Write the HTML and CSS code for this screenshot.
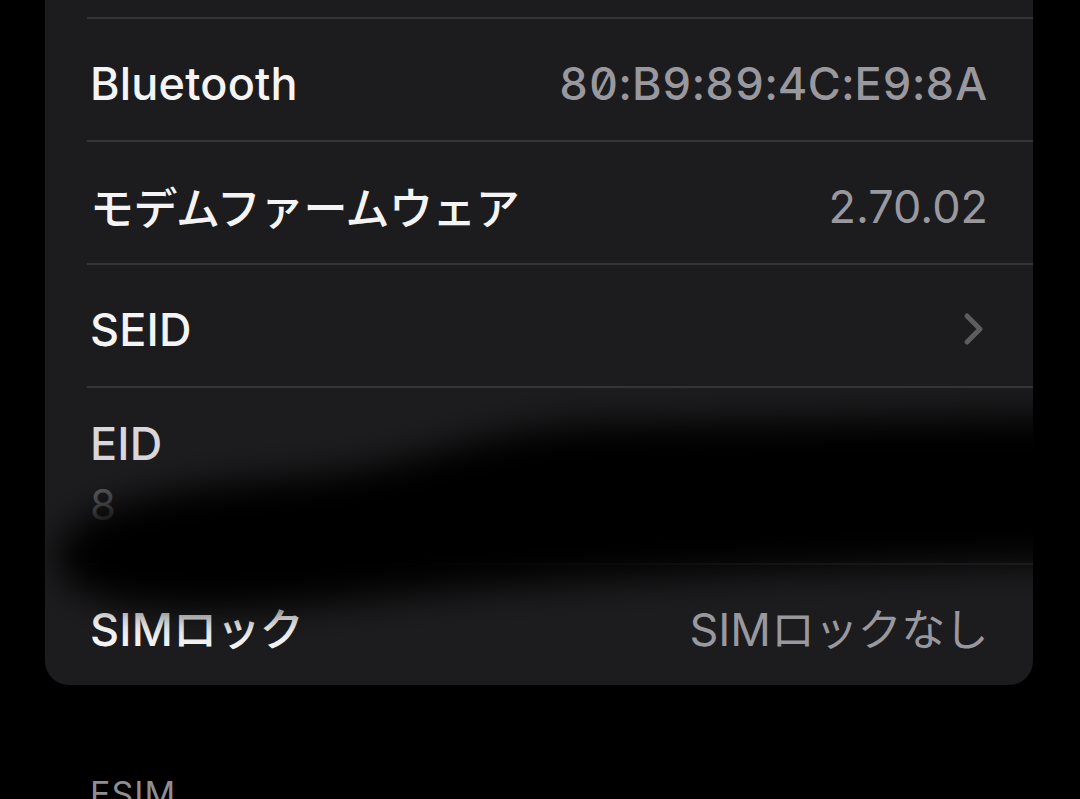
FILE: index.html
```html
<!DOCTYPE html>
<html lang="ja">
<head>
<meta charset="utf-8">
<link rel="stylesheet" href="styles.css">
</head>
<body>
<div class="screen">
  <div class="card">
    <div class="row top"></div>
    <div class="row">
      <span class="label">Bluetooth</span>
      <span class="value mono">80:B9:89:4C:E9:8A</span>
    </div>
    <div class="row">
      <span class="label ja">モデムファームウェア</span>
      <span class="value">2.70.02</span>
    </div>
    <div class="row">
      <span class="label">SEID</span>
      <svg class="chev" width="24" height="34" viewBox="0 0 24 34"><path d="M5 4 L18 17 L5 30" fill="none" stroke="#5c5c61" stroke-width="5" stroke-linecap="round" stroke-linejoin="round"/></svg>
    </div>
    <div class="row eid">
      <span class="label">EID</span>
      <span class="eidval">8</span>
    </div>
    <div class="row last">
      <span class="label">SIM<span class="ja">ロック</span></span>
      <span class="value">SIM<span class="ja">ロックなし</span></span>
    </div>
  </div>
  <div class="section-head">ESIM</div>
  <svg class="smudge" width="1080" height="799" viewBox="0 0 1080 799">
    <defs>
      <filter id="blur" x="-20%" y="-50%" width="140%" height="200%">
        <feGaussianBlur stdDeviation="17"/>
      </filter>
    </defs>
    <path filter="url(#blur)" fill="#000" d="M58 562 C50 508 170 486 290 478 C410 470 460 432 590 424 L1065 416 L1070 562 C830 566 560 576 330 602 C170 616 66 608 58 562 Z"/>
  </svg>
</div>
</body>
</html>
```

FILE: styles.css
```css
html, body {
  margin: 0;
  padding: 0;
  background: #000;
}
body {
  font-family: Inter, "Noto Sans CJK JP", sans-serif;
  color: #f4f4f5;
  overflow: hidden;
}
.screen {
  position: relative;
  width: 1080px;
  height: 799px;
  overflow: hidden;
}
.card {
  margin: -40px 47px 0 45px;
  background: #1c1c1e;
  border-radius: 24px;
  overflow: hidden;
}
.row {
  margin-left: 42px;
  padding: 7px 45px 0 3px;
  height: 114px;
  display: flex;
  align-items: center;
  justify-content: space-between;
  border-bottom: 2px solid #353538;
}
.row.top {
  height: 57px;
  padding-top: 0;
}
.row.eid {
  height: 175px;
  padding-top: 0;
  flex-direction: column;
  align-items: flex-start;
  justify-content: flex-start;
}
.row.last {
  border-bottom: none;
  height: 116px;
  padding-top: 4px;
}
.label {
  font-size: 45px;
  font-weight: 500;
  letter-spacing: 0.2px;
  white-space: nowrap;
}
.value {
  font-size: 45px;
  color: #98989e;
  white-space: nowrap;
}
.mono {
  font-feature-settings: "tnum" 1, "zero" 1;
  letter-spacing: 0.8px;
  font-weight: 500;
}
.ja {
  font-family: "Noto Sans CJK JP", sans-serif;
  font-size: 44px;
  letter-spacing: -0.6px;
}
.label .ja, .label.ja { font-weight: 500; }
.value .ja { font-weight: 400; }
.chev {
  display: block;
  margin-right: 2px;
}
.eid .label {
  margin-top: 28px;
  color: #d8d8dc;
}
.eidval {
  margin-top: 8px;
  font-size: 42px;
  color: #5a5a5e;
}
.section-head {
  margin: 88px 0 0 90px;
  font-size: 34px;
  color: #8e8e93;
  letter-spacing: 1px;
}
.smudge {
  position: absolute;
  left: 0;
  top: 0;
  pointer-events: none;
}
```
